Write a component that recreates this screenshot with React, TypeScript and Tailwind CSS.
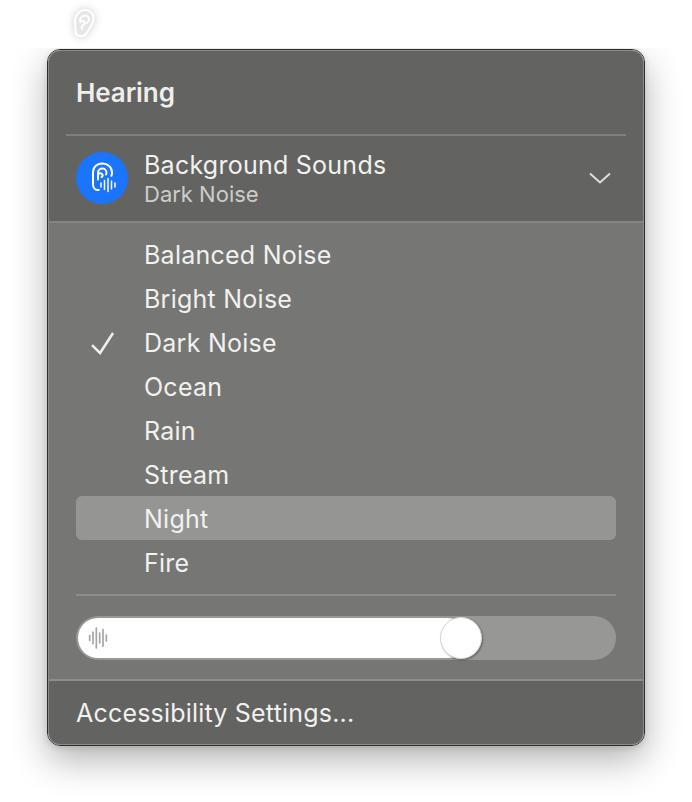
function Wave({ className, heights, sw }: { className?: string; heights: number[]; sw: number }) {
  return (
    <svg viewBox={`0 0 ${heights.length * 4} 24`} stroke="currentColor" strokeWidth={sw} strokeLinecap="round" className={className}>
      {heights.map((h, i) => (
        <line key={i} x1={i * 4 + 2} x2={i * 4 + 2} y1={12 - h / 2} y2={12 + h / 2} />
      ))}
    </svg>
  );
}

function HearingBadge() {
  return (
    <svg viewBox="0 0 52 52" className="w-[52px] h-[52px] shrink-0" fill="none" strokeLinecap="round" strokeLinejoin="round">
      <circle cx="26" cy="26" r="26" fill="#1a74fc" />
      <g stroke="white">
        <path strokeWidth="2" d="M17 32V20.500c0-6 4.500-9 9.500-9s9.500 3.500 9.500 9c0 1.200-.2 2.300-.6 3.300" />
        <path strokeWidth="2" d="M17 32c0 3.500 2 6 4.500 6h1.300" />
        <path strokeWidth="2" d="M22 27.500V21c0-2.800 2-4.500 4.300-4.500s4.200 1.700 4.200 4c0 .8-.2 1.500-.5 2" />
        <path strokeWidth="2" d="M22 22.500c1.200-1.300 3-1.500 4-.6 1 1 .8 2.200-.4 3.200" />
        <path strokeWidth="1.500" d="M25 31v4M28.500 28.500v9M32 26.500v13M35.500 29v8M39 31v4" />
      </g>
    </svg>
  );
}

const items = ["Balanced Noise", "Bright Noise", "Dark Noise", "Ocean", "Rain", "Stream", "Night", "Fire"];
const label = "text-[25px] leading-[28px] tracking-[0.25px] text-[#f1f1f0]";

export default function App() {
  return (
    <div className="w-[692px] h-[802px] bg-white overflow-hidden font-['Inter',sans-serif] antialiased">
      <div className="h-[48px] pl-[73px] pt-[8px]">
        <div className="w-[22px] h-[30px] drop-shadow-[0_0_4px_rgba(0,0,0,0.2)]">
          <svg viewBox="0 0 22 30" className="w-[22px] h-[30px]" fill="#e6e6e6" stroke="white" strokeWidth="2" strokeLinejoin="round" strokeLinecap="round">
            <path d="M2 12C3 6 7 2 12 2c5 0 8.500 4 8.500 8 0 5-3 9-5.500 13-1.500 3-3.500 5-7 5-3.500 0-5.500-2-5.500-5 0-4-.5-7-.5-11z" />
            <path fill="none" strokeWidth="1.800" d="M7 14c-.5-4 2-6.500 5-6.500 2.500 0 4 2 4 4 0 1.500-1 2.500-2 3.500M7.500 14c1-1.500 3-1.500 3.800-.5 1 1.300 0 2.500-1 3.300L9 18.500V21" />
          </svg>
        </div>
      </div>
      <div className="h-[754px] overflow-hidden pl-[47px] pt-px">
        <div className="w-[598px] h-[697px] rounded-[13px] border border-[#2e2e2d] shadow-[0_14px_36px_rgba(0,0,0,0.3),0_2px_6px_rgba(0,0,0,0.12)] overflow-hidden">
          <div className="h-full rounded-[12px] border border-[#8b8b89] overflow-hidden flex flex-col bg-[#636361]">
            <div className="h-[83px] shrink-0 flex items-center pl-[27px]">
              <span className="text-[26px] leading-[30px] font-semibold text-[#eeeeed] tracking-[-0.1px]">Hearing</span>
            </div>
            <div className="ml-[17px] mr-[17px] h-[2px] shrink-0 bg-[#7f7f7d]" />
            <div className="h-[85px] shrink-0 flex items-center pl-[27px] pr-[32px] pb-px">
              <HearingBadge />
              <div className="ml-[16px] flex-1 flex flex-col pt-[4px]">
                <span className={label}>Background Sounds</span>
                <span className="text-[22px] leading-[30px] text-[#cdcdca]">Dark Noise</span>
              </div>
              <svg viewBox="0 0 22 12" className="w-[22px] h-[12px]" fill="none" stroke="#dededc" strokeWidth="2">
                <path d="M1 1.500 11 10.500 21 1.500" />
              </svg>
            </div>
            <div className="h-[2px] shrink-0 bg-[#848482]" />
            <div className="h-[456px] shrink-0 bg-[#767674] px-[27px] pt-[9px] flex flex-col">
              {items.map((it) => (
                <div key={it} className={`h-[44px] shrink-0 flex items-center rounded-[6px] pl-[68px] pt-[2px] relative ${it === "Night" ? "bg-[#959593]" : ""}`}>
                  {it === "Dark Noise" && (
                    <svg viewBox="0 0 24 24" className="absolute left-[13px] top-[9px] w-[26px] h-[26px]" fill="none" stroke="#f0f0ef" strokeWidth="2.300">
                      <path d="M2.800 14.800 10.200 22.200 22.200 3.700" />
                    </svg>
                  )}
                  <span className={label}>{it}</span>
                </div>
              ))}
              <div className="mt-[10px] h-[2px] shrink-0 bg-[#8d8d8b]" />
              <div className="mt-[20px] h-[44px] shrink-0 rounded-full bg-[#979795] flex items-center px-[2px] relative">
                <div className="w-[390px] h-[40px] rounded-full bg-white flex items-center text-[#a5a5a3] pl-[10px]">
                  <Wave className="w-[20px] h-[22px]" heights={[6, 14, 24, 12, 20, 7]} sw={2} />
                </div>
                <div className="absolute left-[364px] top-px w-[42px] h-[42px] rounded-full bg-white border border-[#d5d5d3] shadow-[1px_1px_2px_rgba(0,0,0,0.35)]" />
              </div>
            </div>
            <div className="h-[2px] shrink-0 bg-[#8d8d8b]" />
            <div className="flex-1 flex items-center pl-[27px] pt-px">
              <span className="text-[25px] leading-[28px] tracking-[0.2px] text-[#f1f1f0]">Accessibility Settings...</span>
            </div>
          </div>
        </div>
      </div>
    </div>
  );
}
